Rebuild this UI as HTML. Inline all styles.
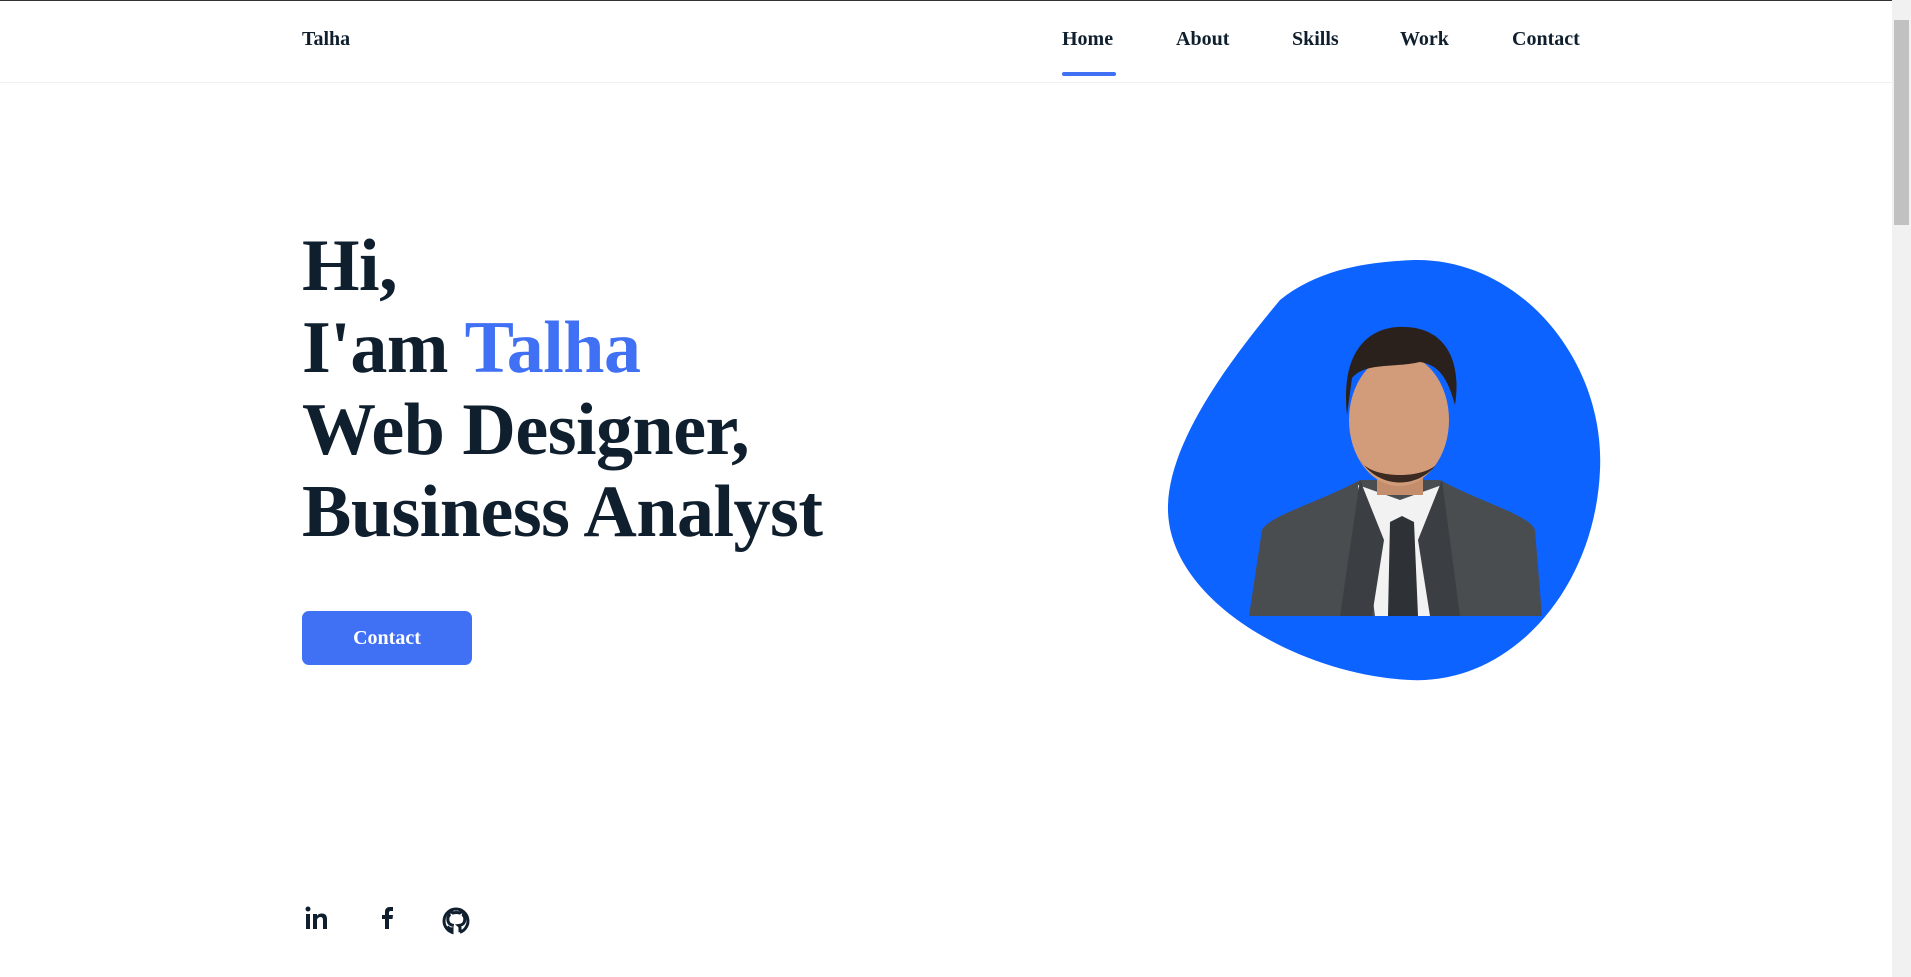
<!DOCTYPE html>
<html><head><meta charset="utf-8"><style>
*{margin:0;padding:0;box-sizing:border-box}
html,body{width:1911px;height:977px;overflow:hidden;background:#fff;font-family:"Liberation Serif",serif;color:#0f1f2e}
.top{position:absolute;left:0;top:0;width:1911px;height:1px;background:#333}
header{position:absolute;left:0;top:1px;width:1892px;height:82px;border-bottom:1px solid #eef0f3;background:#fff}
.logo{position:absolute;left:302px;top:27px;font-size:20px;font-weight:600}
nav a{position:absolute;top:27px;font-size:20px;font-weight:600;color:#0f1f2e;text-decoration:none}
.ul{position:absolute;left:1062px;top:71px;width:54px;height:4px;background:#4070f4;border-radius:2px}
h1{position:absolute;left:302px;top:225px;font-size:74px;line-height:82px;font-weight:700;letter-spacing:-0.5px;color:#0f1f2e}
h1 span{color:#4070f4}
.btn{position:absolute;left:302px;top:611px;width:170px;height:54px;background:#4070f4;border-radius:7px;color:#fff;font-size:20px;font-weight:700;text-align:center;line-height:54px}
.sb{position:absolute;left:1892px;top:0;width:19px;height:977px;background:#f1f1f1}
.th{position:absolute;left:1894px;top:20px;width:15px;height:205px;background:#c1c1c1}
svg{position:absolute;left:0;top:0}
</style></head><body>
<div class="top"></div>
<header>
<div class="logo">Talha</div>
<nav>
<a style="left:1062px">Home</a>
<a style="left:1176px">About</a>
<a style="left:1292px">Skills</a>
<a style="left:1400px">Work</a>
<a style="left:1512px">Contact</a>
</nav>
<div class="ul"></div>
</header>
<h1>Hi,<br>I'am <span>Talha</span><br>Web Designer,<br>Business Analyst</h1>
<div class="btn">Contact</div>
<svg width="1911" height="977">
<path d="M1414,260 C1520,258 1605,360 1600,470 C1595,590 1510,685 1410,680 C1300,675 1165,600 1168,505 C1170,440 1230,360 1280,300 C1320,268 1370,262 1414,260 Z" fill="#0d63ff"/>
<path d="M1249,616 L1262,530 C1270,515 1320,502 1360,480 L1440,480 C1480,502 1530,515 1535,530 L1542,616 Z" fill="#4a4d50"/>
<path d="M1358,485 L1375,616 L1442,616 L1442,485 L1400,500 Z" fill="#f2f2f2"/>
<path d="M1390,522 L1402,516 L1414,522 L1418,616 L1388,616 Z" fill="#2e3136"/>
<path d="M1360,480 L1384,540 L1372,616 L1340,616 Z M1442,480 L1418,540 L1430,616 L1460,616 Z" fill="#3b3e42"/>
<rect x="1377" y="450" width="46" height="45" fill="#c48d6c"/>
<ellipse cx="1399" cy="420" rx="50" ry="66" fill="#d29c7a"/>
<path d="M1347,415 C1340,350 1370,325 1405,327 C1445,328 1462,360 1455,405 C1448,380 1440,365 1420,362 C1395,368 1365,362 1352,378 Z" fill="#2a211d"/>
<path d="M1360,460 C1380,490 1420,490 1440,460 C1430,480 1370,480 1360,460 Z" fill="#3a2a22"/>
<g fill="#0f1f2e">
<rect x="306" y="914" width="4" height="15"/><circle cx="308" cy="909" r="2.5"/>
<path d="M313,914 h4 v2 c1,-2 3,-2.5 5,-2.5 c4,0 5,2.5 5,6 v9.5 h-4 v-8.5 c0,-2 -0.5,-3.5 -2.5,-3.5 c-2,0 -3.5,1.5 -3.5,3.5 v8.5 h-4 z"/>
<path d="M385,929 v-10 h-3 v-4 h3 v-3 c0,-3.5 2,-5 5,-5 h3 v4 h-2 c-1.5,0 -2,0.5 -2,2 v2 h4 l-0.5,4 h-3.5 v10 z"/>
</g>
<path d="M456,909 a12,12 0 0 0 -4,23.3 v-3.5 c-3,0.5 -4,-1.5 -4.5,-2.5 M460,932.3 v-4 c0,-1.5 -0.5,-2.3 -1.2,-2.8 c3,-0.4 6,-1.5 6,-6.6 c0,-1.5 -0.5,-2.7 -1.4,-3.6 c0.2,-0.4 0.6,-1.8 -0.1,-3.7 c0,0 -1.2,-0.4 -3.7,1.4 a12.6,12.6 0 0 0 -6.6,0 c-2.5,-1.7 -3.7,-1.4 -3.7,-1.4 c-0.7,1.9 -0.3,3.3 -0.1,3.7 c-0.9,0.9 -1.4,2.1 -1.4,3.6 c0,5 3,6.2 6,6.6 M460,932.3 a12,12 0 0 0 -4,-23.3" fill="none" stroke="#0f1f2e" stroke-width="3"/>
</svg>
<div class="sb"></div><div class="th"></div>
</body></html>
